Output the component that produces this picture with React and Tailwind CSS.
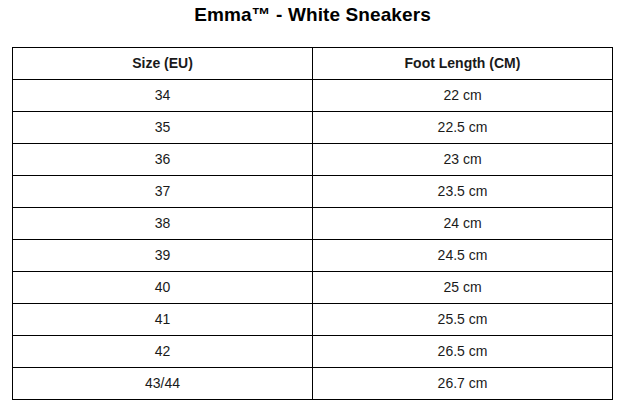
import React from 'react';

const rows = [
  ['34', '22 cm'],
  ['35', '22.5 cm'],
  ['36', '23 cm'],
  ['37', '23.5 cm'],
  ['38', '24 cm'],
  ['39', '24.5 cm'],
  ['40', '25 cm'],
  ['41', '25.5 cm'],
  ['42', '26.5 cm'],
  ['43/44', '26.7 cm'],
];

export default function App() {
  return (
    <div className="w-[625px] h-[409px] bg-white px-3 pt-[4px] font-['Liberation_Sans',Arial,sans-serif] text-[#1a1a1a]">
      <h1 className="text-center text-[19px] font-bold leading-[22px] tracking-[0.1px] text-black">Emma™ - White Sneakers</h1>
      <table className="mt-[21px] w-[601px] border-collapse text-[14px] text-center">
        <thead>
          <tr className="h-[32px]">
            <th className="w-[300px] border border-black font-bold">Size (EU)</th>
            <th className="border border-black font-bold">Foot Length (CM)</th>
          </tr>
        </thead>
        <tbody>
          {rows.map(([size, len]) => (
            <tr key={size} className="h-[32px]">
              <td className="border border-black font-normal">{size}</td>
              <td className="border border-black">{len}</td>
            </tr>
          ))}
        </tbody>
      </table>
    </div>
  );
}
